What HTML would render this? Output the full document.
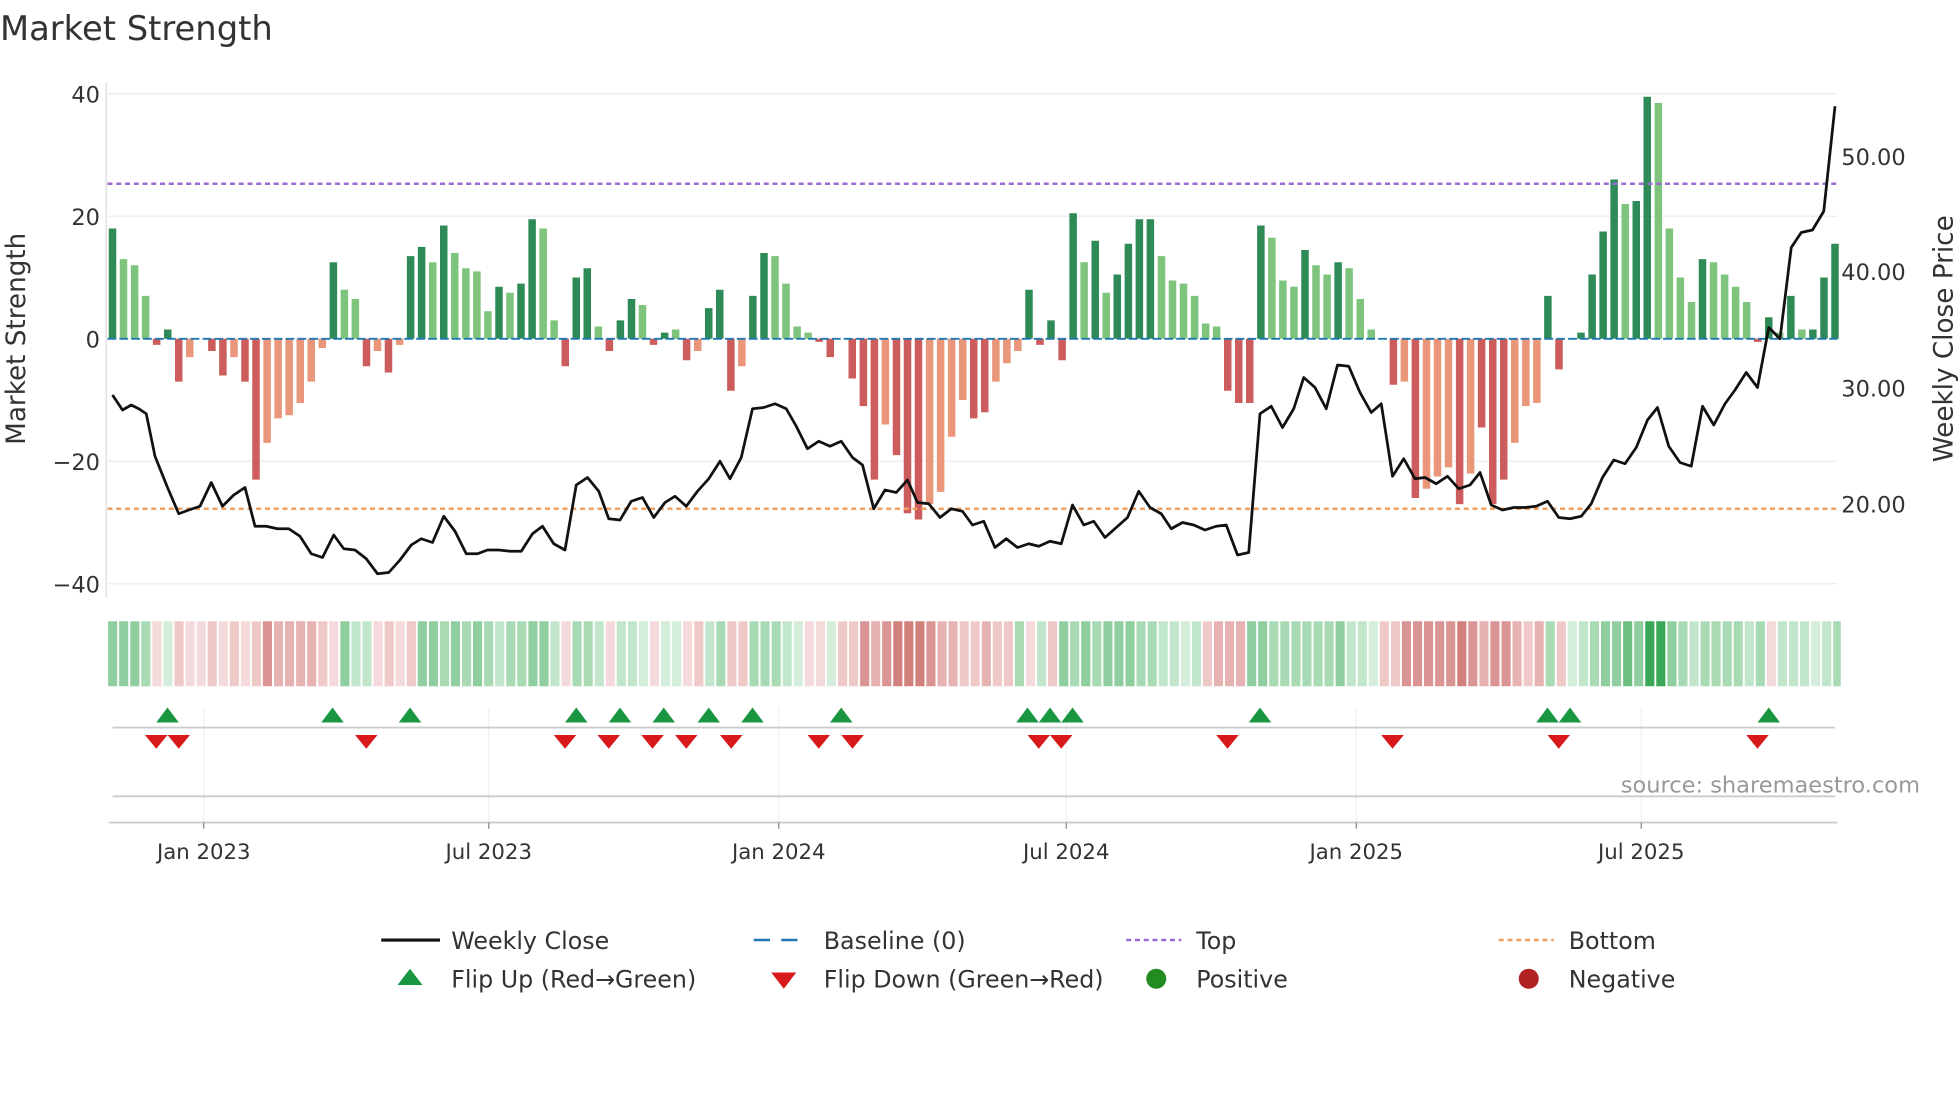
<!DOCTYPE html>
<html><head><meta charset="utf-8"><style>
html,body{margin:0;padding:0;background:#fff;}
svg{display:block;font-family:"DejaVu Sans","Liberation Sans",sans-serif;}
.d{fill:#2e8b57}.l{fill:#7fc47c}.r{fill:#cd5c5c}.s{fill:#e9967a}
.G0{fill:#d5eedb}.G1{fill:#c2e6cb}.G2{fill:#a8dab4}.G3{fill:#8fce9f}.G4{fill:#3aa757}.G5{fill:#6cbf80}
.P0{fill:#f4dada}.P1{fill:#efc8c8}.P2{fill:#e6b2b2}.P3{fill:#db9494}.P4{fill:#d2807c}
</style></head><body>
<svg width="1960" height="1102" viewBox="0 0 1568 881.6" xmlns="http://www.w3.org/2000/svg">
<rect width="1568" height="882" fill="#fff"/>
<text x="0" y="32" font-size="27" fill="#333">Market Strength</text>
<g stroke="#ececf0" stroke-width="1">
<line x1="86" y1="75" x2="1470" y2="75"/><line x1="86" y1="173" x2="1470" y2="173"/>
<line x1="86" y1="369" x2="1470" y2="369"/><line x1="86" y1="467" x2="1470" y2="467"/>
</g>
<line x1="85" y1="66" x2="85" y2="478" stroke="#ddd"/>
<g font-size="18" fill="#333" text-anchor="end">
<text x="80" y="82">40</text><text x="80" y="180">20</text><text x="80" y="278">0</text>
<text x="80" y="376">−20</text><text x="80" y="474">−40</text>
</g>
<g font-size="18" fill="#333">
<text x="1473" y="132">50.00</text><text x="1473" y="224">40.00</text>
<text x="1473" y="317">30.00</text><text x="1473" y="410">20.00</text>
</g>
<text transform="translate(20,271) rotate(-90)" font-size="21" fill="#333" text-anchor="middle">Market Strength</text>
<text transform="translate(1562,271) rotate(-90)" font-size="21" fill="#333" text-anchor="middle">Weekly Close Price</text>
<g>
<rect class="d" x="87" y="182.8" width="6" height="88.2"/>
<rect class="l" x="95.8" y="207.3" width="6" height="63.7"/>
<rect class="l" x="104.7" y="212.2" width="6" height="58.8"/>
<rect class="l" x="113.5" y="236.7" width="6" height="34.3"/>
<rect class="r" x="122.3" y="271" width="6" height="4.9"/>
<rect class="d" x="131.2" y="263.6" width="6" height="7.4"/>
<rect class="r" x="140" y="271" width="6" height="34.3"/>
<rect class="s" x="148.8" y="271" width="6" height="14.7"/>
<rect class="r" x="166.5" y="271" width="6" height="9.8"/>
<rect class="r" x="175.3" y="271" width="6" height="29.4"/>
<rect class="s" x="184.2" y="271" width="6" height="14.7"/>
<rect class="r" x="193" y="271" width="6" height="34.3"/>
<rect class="r" x="201.8" y="271" width="6" height="112.7"/>
<rect class="s" x="210.7" y="271" width="6" height="83.3"/>
<rect class="s" x="219.5" y="271" width="6" height="63.7"/>
<rect class="s" x="228.3" y="271" width="6" height="61.2"/>
<rect class="s" x="237.2" y="271" width="6" height="51.4"/>
<rect class="s" x="246" y="271" width="6" height="34.3"/>
<rect class="s" x="254.8" y="271" width="6" height="7.4"/>
<rect class="d" x="263.7" y="209.8" width="6" height="61.2"/>
<rect class="l" x="272.5" y="231.8" width="6" height="39.2"/>
<rect class="l" x="281.3" y="239.2" width="6" height="31.8"/>
<rect class="r" x="290.2" y="271" width="6" height="22"/>
<rect class="s" x="299" y="271" width="6" height="9.8"/>
<rect class="r" x="307.8" y="271" width="6" height="27"/>
<rect class="s" x="316.7" y="271" width="6" height="4.9"/>
<rect class="d" x="325.5" y="204.9" width="6" height="66.1"/>
<rect class="d" x="334.3" y="197.5" width="6" height="73.5"/>
<rect class="l" x="343.2" y="209.8" width="6" height="61.2"/>
<rect class="d" x="352" y="180.4" width="6" height="90.6"/>
<rect class="l" x="360.8" y="202.4" width="6" height="68.6"/>
<rect class="l" x="369.7" y="214.6" width="6" height="56.4"/>
<rect class="l" x="378.5" y="217.1" width="6" height="53.9"/>
<rect class="l" x="387.3" y="249" width="6" height="22"/>
<rect class="d" x="396.2" y="229.4" width="6" height="41.6"/>
<rect class="l" x="405" y="234.2" width="6" height="36.8"/>
<rect class="d" x="413.8" y="226.9" width="6" height="44.1"/>
<rect class="d" x="422.7" y="175.4" width="6" height="95.6"/>
<rect class="l" x="431.5" y="182.8" width="6" height="88.2"/>
<rect class="l" x="440.3" y="256.3" width="6" height="14.7"/>
<rect class="r" x="449.2" y="271" width="6" height="22"/>
<rect class="d" x="458" y="222" width="6" height="49"/>
<rect class="d" x="466.8" y="214.6" width="6" height="56.4"/>
<rect class="l" x="475.7" y="261.2" width="6" height="9.8"/>
<rect class="r" x="484.5" y="271" width="6" height="9.8"/>
<rect class="d" x="493.3" y="256.3" width="6" height="14.7"/>
<rect class="d" x="502.2" y="239.2" width="6" height="31.8"/>
<rect class="l" x="511" y="244" width="6" height="27"/>
<rect class="r" x="519.8" y="271" width="6" height="4.9"/>
<rect class="d" x="528.7" y="266.1" width="6" height="4.9"/>
<rect class="l" x="537.5" y="263.6" width="6" height="7.4"/>
<rect class="r" x="546.3" y="271" width="6" height="17.2"/>
<rect class="s" x="555.2" y="271" width="6" height="9.8"/>
<rect class="d" x="564" y="246.5" width="6" height="24.5"/>
<rect class="d" x="572.8" y="231.8" width="6" height="39.2"/>
<rect class="r" x="581.7" y="271" width="6" height="41.6"/>
<rect class="s" x="590.5" y="271" width="6" height="22"/>
<rect class="d" x="599.3" y="236.7" width="6" height="34.3"/>
<rect class="d" x="608.2" y="202.4" width="6" height="68.6"/>
<rect class="l" x="617" y="204.9" width="6" height="66.1"/>
<rect class="l" x="625.8" y="226.9" width="6" height="44.1"/>
<rect class="l" x="634.7" y="261.2" width="6" height="9.8"/>
<rect class="l" x="643.5" y="266.1" width="6" height="4.9"/>
<rect class="r" x="652.3" y="271" width="6" height="2.5"/>
<rect class="r" x="661.2" y="271" width="6" height="14.7"/>
<rect class="r" x="678.8" y="271" width="6" height="31.8"/>
<rect class="r" x="687.7" y="271" width="6" height="53.9"/>
<rect class="r" x="696.5" y="271" width="6" height="112.7"/>
<rect class="s" x="705.3" y="271" width="6" height="68.6"/>
<rect class="r" x="714.2" y="271" width="6" height="93.1"/>
<rect class="r" x="723" y="271" width="6" height="139.6"/>
<rect class="r" x="731.8" y="271" width="6" height="144.6"/>
<rect class="s" x="740.7" y="271" width="6" height="132.3"/>
<rect class="s" x="749.5" y="271" width="6" height="122.5"/>
<rect class="s" x="758.3" y="271" width="6" height="78.4"/>
<rect class="s" x="767.2" y="271" width="6" height="49"/>
<rect class="r" x="776" y="271" width="6" height="63.7"/>
<rect class="r" x="784.8" y="271" width="6" height="58.8"/>
<rect class="s" x="793.7" y="271" width="6" height="34.3"/>
<rect class="s" x="802.5" y="271" width="6" height="19.6"/>
<rect class="s" x="811.3" y="271" width="6" height="9.8"/>
<rect class="d" x="820.2" y="231.8" width="6" height="39.2"/>
<rect class="r" x="829" y="271" width="6" height="4.9"/>
<rect class="d" x="837.8" y="256.3" width="6" height="14.7"/>
<rect class="r" x="846.7" y="271" width="6" height="17.2"/>
<rect class="d" x="855.5" y="170.6" width="6" height="100.4"/>
<rect class="l" x="864.3" y="209.8" width="6" height="61.2"/>
<rect class="d" x="873.2" y="192.6" width="6" height="78.4"/>
<rect class="l" x="882" y="234.2" width="6" height="36.8"/>
<rect class="d" x="890.8" y="219.6" width="6" height="51.4"/>
<rect class="d" x="899.7" y="195" width="6" height="76"/>
<rect class="d" x="908.5" y="175.4" width="6" height="95.6"/>
<rect class="d" x="917.3" y="175.4" width="6" height="95.6"/>
<rect class="l" x="926.2" y="204.9" width="6" height="66.1"/>
<rect class="l" x="935" y="224.4" width="6" height="46.6"/>
<rect class="l" x="943.8" y="226.9" width="6" height="44.1"/>
<rect class="l" x="952.7" y="236.7" width="6" height="34.3"/>
<rect class="l" x="961.5" y="258.8" width="6" height="12.2"/>
<rect class="l" x="970.3" y="261.2" width="6" height="9.8"/>
<rect class="r" x="979.2" y="271" width="6" height="41.6"/>
<rect class="r" x="988" y="271" width="6" height="51.4"/>
<rect class="r" x="996.8" y="271" width="6" height="51.4"/>
<rect class="d" x="1005.7" y="180.4" width="6" height="90.6"/>
<rect class="l" x="1014.5" y="190.2" width="6" height="80.8"/>
<rect class="l" x="1023.3" y="224.4" width="6" height="46.6"/>
<rect class="l" x="1032.2" y="229.4" width="6" height="41.6"/>
<rect class="d" x="1041" y="200" width="6" height="71"/>
<rect class="l" x="1049.8" y="212.2" width="6" height="58.8"/>
<rect class="l" x="1058.7" y="219.6" width="6" height="51.4"/>
<rect class="d" x="1067.5" y="209.8" width="6" height="61.2"/>
<rect class="l" x="1076.3" y="214.6" width="6" height="56.4"/>
<rect class="l" x="1085.2" y="239.2" width="6" height="31.8"/>
<rect class="l" x="1094" y="263.6" width="6" height="7.4"/>
<rect class="r" x="1111.7" y="271" width="6" height="36.8"/>
<rect class="s" x="1120.5" y="271" width="6" height="34.3"/>
<rect class="r" x="1129.3" y="271" width="6" height="127.4"/>
<rect class="s" x="1138.2" y="271" width="6" height="120"/>
<rect class="s" x="1147" y="271" width="6" height="110.2"/>
<rect class="s" x="1155.8" y="271" width="6" height="102.9"/>
<rect class="r" x="1164.7" y="271" width="6" height="132.3"/>
<rect class="s" x="1173.5" y="271" width="6" height="107.8"/>
<rect class="r" x="1182.3" y="271" width="6" height="71"/>
<rect class="r" x="1191.2" y="271" width="6" height="132.3"/>
<rect class="r" x="1200" y="271" width="6" height="112.7"/>
<rect class="s" x="1208.8" y="271" width="6" height="83.3"/>
<rect class="s" x="1217.7" y="271" width="6" height="53.9"/>
<rect class="s" x="1226.5" y="271" width="6" height="51.4"/>
<rect class="d" x="1235.3" y="236.7" width="6" height="34.3"/>
<rect class="r" x="1244.2" y="271" width="6" height="24.5"/>
<rect class="d" x="1261.8" y="266.1" width="6" height="4.9"/>
<rect class="d" x="1270.7" y="219.6" width="6" height="51.4"/>
<rect class="d" x="1279.5" y="185.2" width="6" height="85.8"/>
<rect class="d" x="1288.3" y="143.6" width="6" height="127.4"/>
<rect class="l" x="1297.2" y="163.2" width="6" height="107.8"/>
<rect class="d" x="1306" y="160.8" width="6" height="110.2"/>
<rect class="d" x="1314.8" y="77.4" width="6" height="193.6"/>
<rect class="l" x="1323.7" y="82.4" width="6" height="188.6"/>
<rect class="l" x="1332.5" y="182.8" width="6" height="88.2"/>
<rect class="l" x="1341.3" y="222" width="6" height="49"/>
<rect class="l" x="1350.2" y="241.6" width="6" height="29.4"/>
<rect class="d" x="1359" y="207.3" width="6" height="63.7"/>
<rect class="l" x="1367.8" y="209.8" width="6" height="61.2"/>
<rect class="l" x="1376.7" y="219.6" width="6" height="51.4"/>
<rect class="l" x="1385.5" y="229.4" width="6" height="41.6"/>
<rect class="l" x="1394.3" y="241.6" width="6" height="29.4"/>
<rect class="r" x="1403.2" y="271" width="6" height="2.5"/>
<rect class="d" x="1412" y="253.8" width="6" height="17.2"/>
<rect class="l" x="1420.8" y="266.1" width="6" height="4.9"/>
<rect class="d" x="1429.7" y="236.7" width="6" height="34.3"/>
<rect class="l" x="1438.5" y="263.6" width="6" height="7.4"/>
<rect class="d" x="1447.3" y="263.6" width="6" height="7.4"/>
<rect class="d" x="1456.2" y="222" width="6" height="49"/>
<rect class="d" x="1465" y="195" width="6" height="76"/>
</g>
<line x1="86" y1="271" x2="1470" y2="271" stroke="#1f77b4" stroke-width="1.5" stroke-dasharray="7,2.5"/>
<line x1="86" y1="147" x2="1470" y2="147" stroke="#9b6bd6" stroke-width="2" stroke-dasharray="4,3"/>
<line x1="86" y1="407" x2="1470" y2="407" stroke="#f0a060" stroke-width="2" stroke-dasharray="4,3"/>
<polyline fill="none" stroke="#111" stroke-width="2.2" stroke-linejoin="round" points="90,316 98,328 105,324 111,327 117,331 124,365 134,390 143,411 151,408 160,405 169,386 178,405 187,396 196,390 204,421 213,421 222,423 231,423 240,429 249,443 258,446 267,428 275,439 284,440 293,447 302,459 311,458 320,448 329,436 337,431 346,434 355,413 364,425 373,443 382,443 390,440 399,440 408,441 417,441 426,427 434,421 443,435 452,440 461,388 470,382 479,393 487,415 496,416 505,401 514,398 523,414 532,402 540,397 549,405 558,393 567,383 576,369 584,383 593,366 602,327 611,326 620,323 629,327 637,341 646,359 655,353 664,357 673,353 682,366 690,372 699,407 708,392 717,394 726,384 734,402 743,403 752,414 761,407 770,409 778,420 787,417 796,438 805,431 814,438 823,435 831,437 840,433 849,435 858,404 867,420 875,417 884,430 893,422 902,414 911,393 920,406 929,411 937,423 946,418 955,420 964,424 973,421 981,420 990,444 999,442 1008,331 1017,325 1026,342 1035,327 1043,302 1052,310 1061,327 1070,292 1079,293 1088,314 1097,330 1105,323 1114,381 1123,367 1132,383 1140,382 1149,387 1158,381 1167,391 1176,388 1184,378 1193,404 1202,408 1211,406 1220,406 1229,405 1238,401 1247,414 1256,415 1265,413 1273,403 1282,382 1291,368 1300,371 1309,358 1318,336 1326,326 1335,357 1344,370 1353,373 1362,325 1371,340 1380,323 1388,312 1397,298 1406,310 1415,262 1424,271 1433,198 1441,186 1450,184 1459,169 1468,85"/>
<!-- heat strip -->
<g>
<rect class="G3" x="86.5" y="497" width="7.3" height="52"/><rect class="G3" x="95.3" y="497" width="7.3" height="52"/><rect class="G3" x="104.2" y="497" width="7.3" height="52"/><rect class="G2" x="113" y="497" width="7.3" height="52"/>
<rect class="P0" x="121.9" y="497" width="7.3" height="52"/><rect class="G0" x="130.7" y="497" width="7.3" height="52"/><rect class="P1" x="139.6" y="497" width="7.3" height="52"/><rect class="P0" x="148.4" y="497" width="7.3" height="52"/><rect class="P0" x="157.3" y="497" width="7.3" height="52"/><rect class="P1" x="166.1" y="497" width="7.3" height="52"/><rect class="P0" x="175" y="497" width="7.3" height="52"/><rect class="P1" x="183.8" y="497" width="7.3" height="52"/><rect class="P0" x="192.7" y="497" width="7.3" height="52"/><rect class="P1" x="201.5" y="497" width="7.3" height="52"/>
<rect class="P3" x="210.3" y="497" width="7.3" height="52"/><rect class="P2" x="219.2" y="497" width="7.3" height="52"/><rect class="P2" x="228" y="497" width="7.3" height="52"/><rect class="P2" x="236.9" y="497" width="7.3" height="52"/><rect class="P2" x="245.7" y="497" width="7.3" height="52"/><rect class="P1" x="254.6" y="497" width="7.3" height="52"/><rect class="P0" x="263.4" y="497" width="7.3" height="52"/>
<rect class="G3" x="272.3" y="497" width="7.3" height="52"/><rect class="G1" x="281.1" y="497" width="7.3" height="52"/><rect class="G1" x="290" y="497" width="7.3" height="52"/><rect class="P0" x="298.8" y="497" width="7.3" height="52"/><rect class="P1" x="307.7" y="497" width="7.3" height="52"/><rect class="P0" x="316.5" y="497" width="7.3" height="52"/><rect class="P1" x="325.4" y="497" width="7.3" height="52"/>
<rect class="G3" x="334.2" y="497" width="7.3" height="52"/><rect class="G3" x="343.1" y="497" width="7.3" height="52"/><rect class="G2" x="351.9" y="497" width="7.3" height="52"/><rect class="G3" x="360.7" y="497" width="7.3" height="52"/><rect class="G2" x="369.6" y="497" width="7.3" height="52"/><rect class="G3" x="378.4" y="497" width="7.3" height="52"/><rect class="G2" x="387.3" y="497" width="7.3" height="52"/><rect class="G1" x="396.1" y="497" width="7.3" height="52"/><rect class="G2" x="405" y="497" width="7.3" height="52"/><rect class="G2" x="413.8" y="497" width="7.3" height="52"/><rect class="G3" x="422.7" y="497" width="7.3" height="52"/><rect class="G3" x="431.5" y="497" width="7.3" height="52"/>
<rect class="G1" x="440.3" y="497" width="7.3" height="52"/><rect class="P0" x="449.2" y="497" width="7.3" height="52"/><rect class="G2" x="458" y="497" width="7.3" height="52"/><rect class="G2" x="466.9" y="497" width="7.3" height="52"/><rect class="G1" x="475.7" y="497" width="7.3" height="52"/><rect class="P0" x="484.6" y="497" width="7.3" height="52"/><rect class="G1" x="493.4" y="497" width="7.3" height="52"/><rect class="G1" x="502.3" y="497" width="7.3" height="52"/><rect class="G0" x="511.1" y="497" width="7.3" height="52"/><rect class="P0" x="520" y="497" width="7.3" height="52"/>
<rect class="G0" x="528.8" y="497" width="7.3" height="52"/><rect class="G0" x="537.7" y="497" width="7.3" height="52"/><rect class="P0" x="546.5" y="497" width="7.3" height="52"/><rect class="P1" x="555.4" y="497" width="7.3" height="52"/><rect class="G1" x="564.2" y="497" width="7.3" height="52"/><rect class="G2" x="573" y="497" width="7.3" height="52"/><rect class="P1" x="581.9" y="497" width="7.3" height="52"/><rect class="P1" x="590.7" y="497" width="7.3" height="52"/><rect class="G2" x="599.6" y="497" width="7.3" height="52"/><rect class="G2" x="608.4" y="497" width="7.3" height="52"/>
<rect class="G2" x="617.3" y="497" width="7.3" height="52"/><rect class="G1" x="626.1" y="497" width="7.3" height="52"/><rect class="G0" x="635" y="497" width="7.3" height="52"/><rect class="P0" x="643.8" y="497" width="7.3" height="52"/><rect class="P0" x="652.7" y="497" width="7.3" height="52"/><rect class="G0" x="661.5" y="497" width="7.3" height="52"/><rect class="P1" x="670.4" y="497" width="7.3" height="52"/><rect class="P1" x="679.2" y="497" width="7.3" height="52"/><rect class="P3" x="688.1" y="497" width="7.3" height="52"/><rect class="P2" x="696.9" y="497" width="7.3" height="52"/>
<rect class="P3" x="705.7" y="497" width="7.3" height="52"/><rect class="P4" x="714.6" y="497" width="7.3" height="52"/><rect class="P4" x="723.4" y="497" width="7.3" height="52"/><rect class="P4" x="732.3" y="497" width="7.3" height="52"/><rect class="P3" x="741.1" y="497" width="7.3" height="52"/><rect class="P2" x="750" y="497" width="7.3" height="52"/><rect class="P2" x="758.8" y="497" width="7.3" height="52"/><rect class="P1" x="767.7" y="497" width="7.3" height="52"/><rect class="P1" x="776.5" y="497" width="7.3" height="52"/><rect class="P2" x="785.4" y="497" width="7.3" height="52"/>
<rect class="P1" x="794.2" y="497" width="7.3" height="52"/><rect class="P1" x="803.1" y="497" width="7.3" height="52"/><rect class="G2" x="811.9" y="497" width="7.3" height="52"/><rect class="P0" x="820.8" y="497" width="7.3" height="52"/><rect class="G1" x="829.6" y="497" width="7.3" height="52"/><rect class="P1" x="838.4" y="497" width="7.3" height="52"/>
<rect class="G3" x="847.3" y="497" width="7.3" height="52"/><rect class="G2" x="856.1" y="497" width="7.3" height="52"/><rect class="G3" x="865" y="497" width="7.3" height="52"/><rect class="G2" x="873.8" y="497" width="7.3" height="52"/><rect class="G3" x="882.7" y="497" width="7.3" height="52"/><rect class="G3" x="891.5" y="497" width="7.3" height="52"/><rect class="G3" x="900.4" y="497" width="7.3" height="52"/><rect class="G2" x="909.2" y="497" width="7.3" height="52"/><rect class="G2" x="918.1" y="497" width="7.3" height="52"/><rect class="G1" x="926.9" y="497" width="7.3" height="52"/><rect class="G1" x="935.8" y="497" width="7.3" height="52"/><rect class="G0" x="944.6" y="497" width="7.3" height="52"/><rect class="G1" x="953.5" y="497" width="7.3" height="52"/><rect class="P1" x="962.3" y="497" width="7.3" height="52"/><rect class="P2" x="971.1" y="497" width="7.3" height="52"/><rect class="P2" x="980" y="497" width="7.3" height="52"/><rect class="P2" x="988.8" y="497" width="7.3" height="52"/>
<rect class="G3" x="997.7" y="497" width="7.3" height="52"/><rect class="G3" x="1006.5" y="497" width="7.3" height="52"/><rect class="G2" x="1015.4" y="497" width="7.3" height="52"/><rect class="G2" x="1024.2" y="497" width="7.3" height="52"/><rect class="G2" x="1033.1" y="497" width="7.3" height="52"/><rect class="G2" x="1041.9" y="497" width="7.3" height="52"/><rect class="G2" x="1050.8" y="497" width="7.3" height="52"/><rect class="G2" x="1059.6" y="497" width="7.3" height="52"/><rect class="G3" x="1068.5" y="497" width="7.3" height="52"/><rect class="G1" x="1077.3" y="497" width="7.3" height="52"/><rect class="G1" x="1086.2" y="497" width="7.3" height="52"/><rect class="G0" x="1095" y="497" width="7.3" height="52"/><rect class="P1" x="1103.8" y="497" width="7.3" height="52"/>
<rect class="P1" x="1112.7" y="497" width="7.3" height="52"/><rect class="P3" x="1121.5" y="497" width="7.3" height="52"/><rect class="P3" x="1130.4" y="497" width="7.3" height="52"/><rect class="P3" x="1139.2" y="497" width="7.3" height="52"/><rect class="P3" x="1148.1" y="497" width="7.3" height="52"/><rect class="P3" x="1156.9" y="497" width="7.3" height="52"/><rect class="P4" x="1165.8" y="497" width="7.3" height="52"/><rect class="P3" x="1174.6" y="497" width="7.3" height="52"/><rect class="P2" x="1183.5" y="497" width="7.3" height="52"/><rect class="P3" x="1192.3" y="497" width="7.3" height="52"/><rect class="P3" x="1201.2" y="497" width="7.3" height="52"/><rect class="P2" x="1210" y="497" width="7.3" height="52"/><rect class="P1" x="1218.9" y="497" width="7.3" height="52"/><rect class="P2" x="1227.7" y="497" width="7.3" height="52"/><rect class="G2" x="1236.5" y="497" width="7.3" height="52"/><rect class="P1" x="1245.4" y="497" width="7.3" height="52"/>
<rect class="G0" x="1254.2" y="497" width="7.3" height="52"/><rect class="G1" x="1263.1" y="497" width="7.3" height="52"/><rect class="G2" x="1271.9" y="497" width="7.3" height="52"/><rect class="G3" x="1280.8" y="497" width="7.3" height="52"/><rect class="G3" x="1289.6" y="497" width="7.3" height="52"/><rect class="G5" x="1298.5" y="497" width="7.3" height="52"/><rect class="G3" x="1307.3" y="497" width="7.3" height="52"/><rect class="G4" x="1316.2" y="497" width="7.3" height="52"/><rect class="G4" x="1325" y="497" width="7.3" height="52"/><rect class="G3" x="1333.9" y="497" width="7.3" height="52"/><rect class="G2" x="1342.7" y="497" width="7.3" height="52"/><rect class="G1" x="1351.6" y="497" width="7.3" height="52"/><rect class="G2" x="1360.4" y="497" width="7.3" height="52"/><rect class="G2" x="1369.2" y="497" width="7.3" height="52"/><rect class="G2" x="1378.1" y="497" width="7.3" height="52"/><rect class="G2" x="1386.9" y="497" width="7.3" height="52"/><rect class="G1" x="1395.8" y="497" width="7.3" height="52"/><rect class="G2" x="1404.6" y="497" width="7.3" height="52"/><rect class="P0" x="1413.5" y="497" width="7.3" height="52"/><rect class="G1" x="1422.3" y="497" width="7.3" height="52"/><rect class="G1" x="1431.2" y="497" width="7.3" height="52"/><rect class="G1" x="1440" y="497" width="7.3" height="52"/><rect class="G0" x="1448.9" y="497" width="7.3" height="52"/><rect class="G1" x="1457.7" y="497" width="7.3" height="52"/><rect class="G2" x="1466.6" y="497" width="6" height="52"/>
</g>
<g stroke="#eef0f4"><line x1="163" y1="566" x2="163" y2="658"/><line x1="391" y1="566" x2="391" y2="658"/><line x1="623" y1="566" x2="623" y2="658"/><line x1="853" y1="566" x2="853" y2="658"/><line x1="1085" y1="566" x2="1085" y2="658"/><line x1="1313" y1="566" x2="1313" y2="658"/></g>
<line x1="90" y1="582" x2="1468" y2="582" stroke="#ccc" stroke-width="1.5"/>
<line x1="90" y1="637" x2="1468" y2="637" stroke="#ccc" stroke-width="1.5"/>
<line x1="87" y1="658" x2="1470" y2="658" stroke="#ccc" stroke-width="1.5"/>
<g stroke="#888"><line x1="163" y1="658" x2="163" y2="663"/><line x1="391" y1="658" x2="391" y2="663"/><line x1="623" y1="658" x2="623" y2="663"/><line x1="853" y1="658" x2="853" y2="663"/><line x1="1085" y1="658" x2="1085" y2="663"/><line x1="1313" y1="658" x2="1313" y2="663"/></g>
<g fill="#1a9641">
<polygon points="134,566 143,578 125,578"/><polygon points="266,566 275,578 257,578"/><polygon points="328,566 337,578 319,578"/><polygon points="461,566 470,578 452,578"/><polygon points="496,566 505,578 487,578"/><polygon points="531,566 540,578 522,578"/><polygon points="567,566 576,578 558,578"/><polygon points="602,566 611,578 593,578"/><polygon points="673,566 682,578 664,578"/><polygon points="822,566 831,578 813,578"/><polygon points="840,566 849,578 831,578"/><polygon points="858,566 867,578 849,578"/><polygon points="1008,566 1017,578 999,578"/><polygon points="1238,566 1247,578 1229,578"/><polygon points="1256,566 1265,578 1247,578"/><polygon points="1415,566 1424,578 1406,578"/>
</g>
<g fill="#d7191c">
<polygon points="116,588 134,588 125,599"/><polygon points="134,588 152,588 143,599"/><polygon points="284,588 302,588 293,599"/><polygon points="443,588 461,588 452,599"/><polygon points="478,588 496,588 487,599"/><polygon points="513,588 531,588 522,599"/><polygon points="540,588 558,588 549,599"/><polygon points="576,588 594,588 585,599"/><polygon points="646,588 664,588 655,599"/><polygon points="673,588 691,588 682,599"/><polygon points="822,588 840,588 831,599"/><polygon points="840,588 858,588 849,599"/><polygon points="973,588 991,588 982,599"/><polygon points="1105,588 1123,588 1114,599"/><polygon points="1238,588 1256,588 1247,599"/><polygon points="1397,588 1415,588 1406,599"/>
</g>
<text x="1536" y="634" font-size="18" fill="#999" text-anchor="end">source: sharemaestro.com</text>
<g font-size="17" fill="#333" text-anchor="middle">
<text x="163" y="687">Jan 2023</text><text x="391" y="687">Jul 2023</text><text x="623" y="687">Jan 2024</text>
<text x="853" y="687">Jul 2024</text><text x="1085" y="687">Jan 2025</text><text x="1313" y="687">Jul 2025</text>
</g>
<g font-size="19" fill="#333">
<line x1="305" y1="752" x2="352" y2="752" stroke="#111" stroke-width="2.5"/><text x="361" y="759">Weekly Close</text>
<line x1="603" y1="752" x2="647" y2="752" stroke="#1f77b4" stroke-width="2" stroke-dasharray="13,9"/><text x="659" y="759">Baseline (0)</text>
<line x1="901" y1="752" x2="945" y2="752" stroke="#9b6bd6" stroke-width="2" stroke-dasharray="4,3"/><text x="957" y="759">Top</text>
<line x1="1199" y1="752" x2="1243" y2="752" stroke="#f0a060" stroke-width="2" stroke-dasharray="4,3"/><text x="1255" y="759">Bottom</text>
<polygon points="328,775 338,788 318,788" fill="#1a9641"/><text x="361" y="790">Flip Up (Red→Green)</text>
<polygon points="617,778 637,778 627,791" fill="#d7191c"/><text x="659" y="790">Flip Down (Green→Red)</text>
<circle cx="925" cy="783" r="8" fill="#228b22"/><text x="957" y="790">Positive</text>
<circle cx="1223" cy="783" r="8" fill="#b22222"/><text x="1255" y="790">Negative</text>
</g>
</svg>
</body></html>
